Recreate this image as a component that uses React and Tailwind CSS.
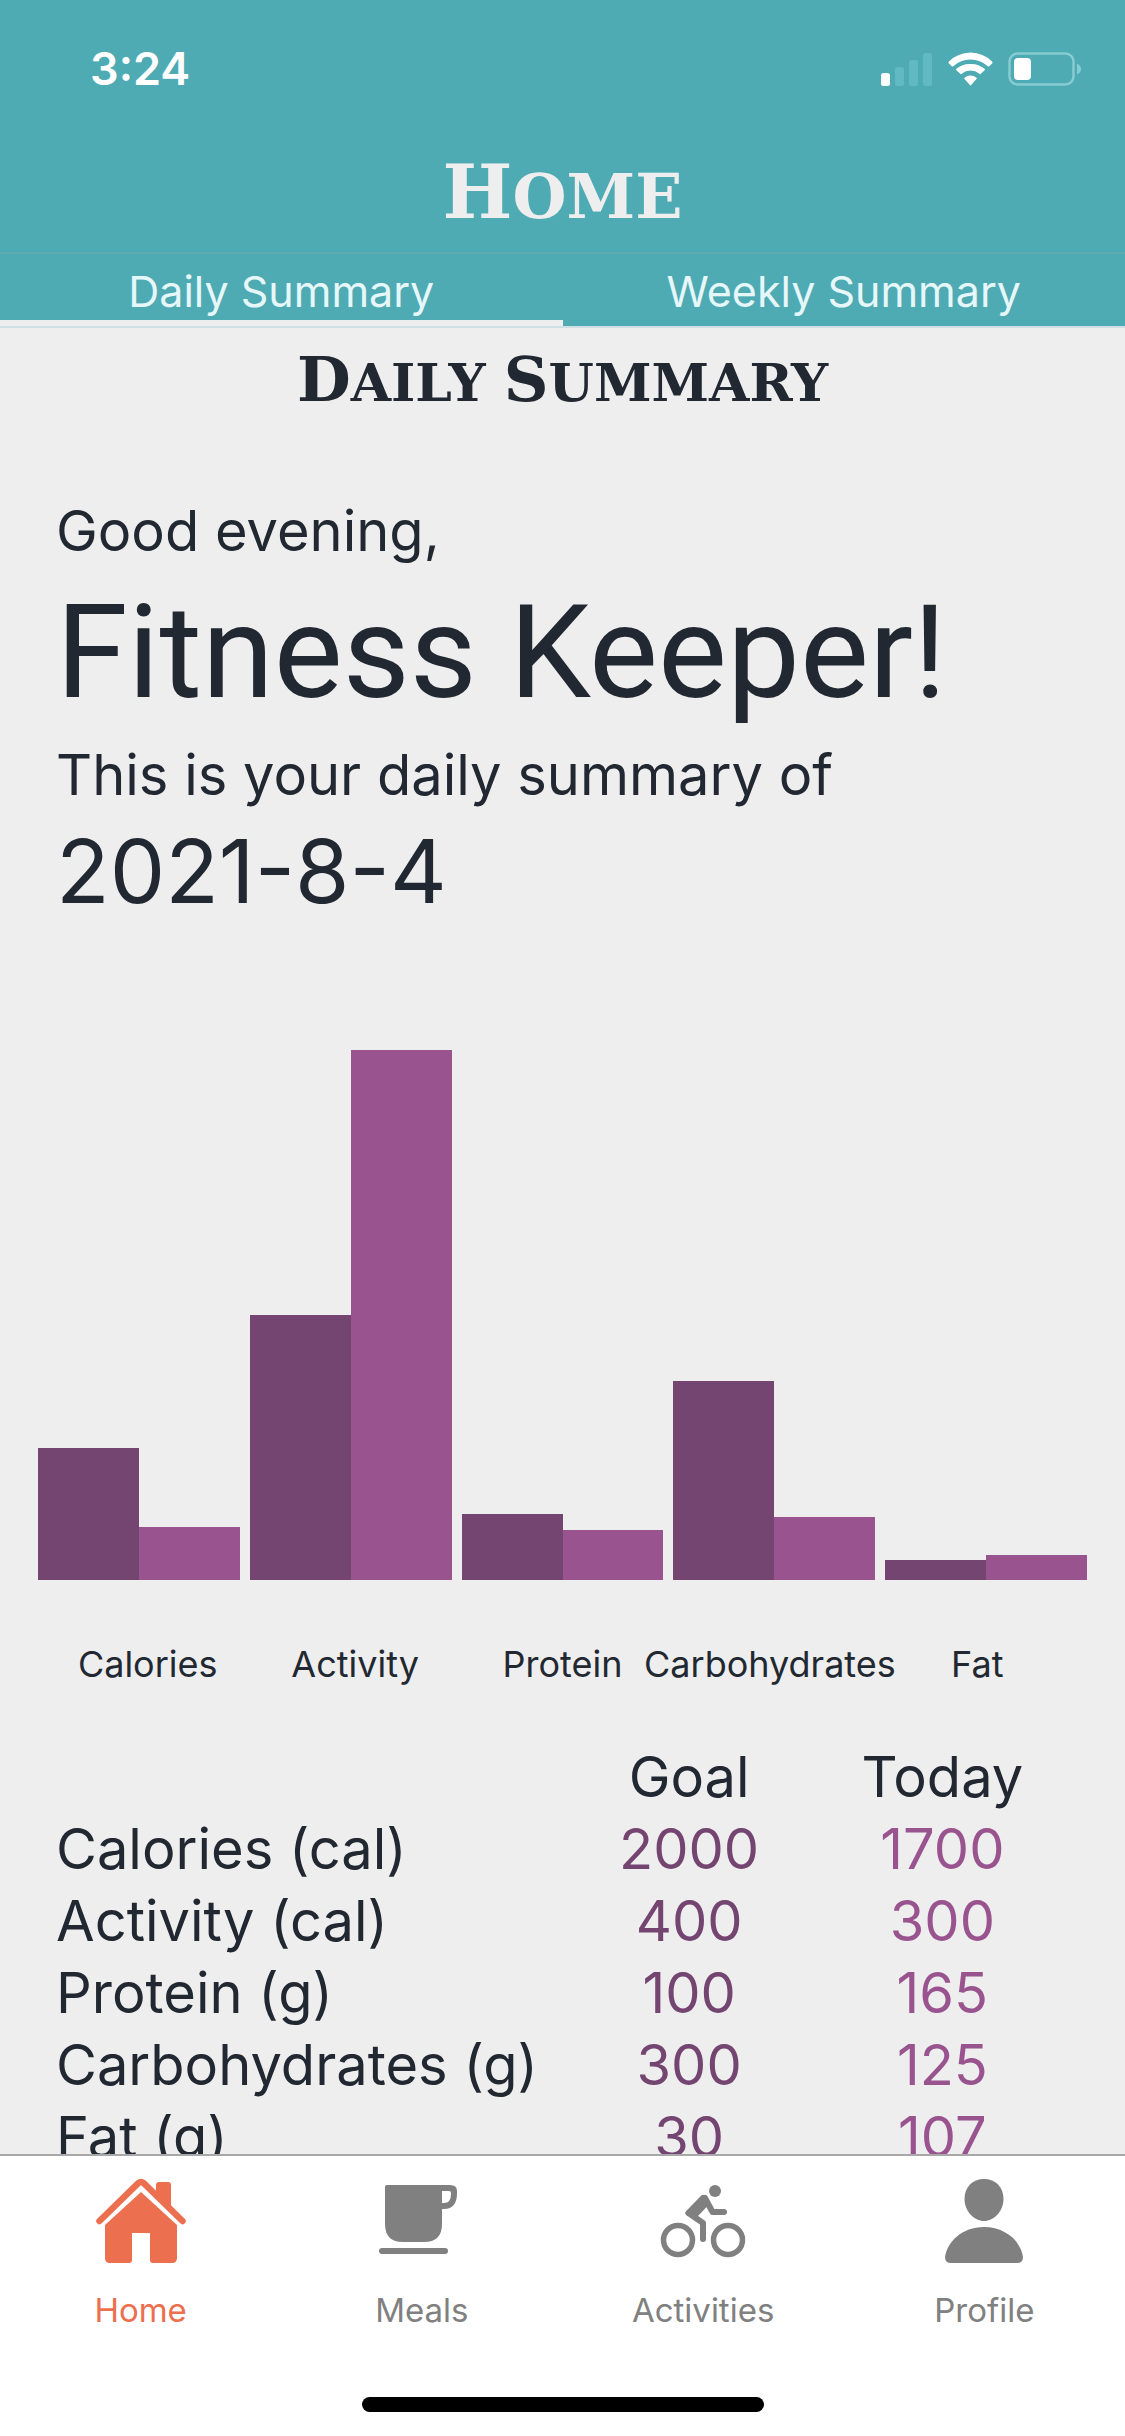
import React from "react";

const metrics = [
  { name: "Calories", unit: "cal", goal: 2000, today: 1700, goalBar: 132, todayBar: 53 },
  { name: "Activity", unit: "cal", goal: 400, today: 300, goalBar: 265, todayBar: 530 },
  { name: "Protein", unit: "g", goal: 100, today: 165, goalBar: 66, todayBar: 50 },
  { name: "Carbohydrates", unit: "g", goal: 300, today: 125, goalBar: 199, todayBar: 63 },
  { name: "Fat", unit: "g", goal: 30, today: 107, goalBar: 20, todayBar: 25 },
];

function StatusIcons() {
  return (
    <div className="flex items-center gap-[15px] text-white">
      <svg width="52" height="36" viewBox="0 0 52 36" aria-label="Signal">
        <rect x="0" y="22" width="9" height="13" rx="2.5" fill="currentColor" />
        <rect x="14" y="16" width="9" height="19" rx="2.5" fill="#61bac3" />
        <rect x="28" y="9" width="9" height="26" rx="2.5" fill="#61bac3" />
        <rect x="42" y="2" width="9" height="33" rx="2.5" fill="#61bac3" />
      </svg>
      <svg width="45" height="36" viewBox="0 0 45 36" aria-label="Wi-Fi" fill="currentColor">
        <path d="M22.500 8.500a26 26 0 0 1 17.300 6.700q.8.700 1.500 0l3-3q.7-.8 0-1.500A31.500 31.500 0 0 0 22.500 1.500 31.500 31.500 0 0 0 .7 10.700q-.7.700 0 1.500l3 3q.7.700 1.500 0A26 26 0 0 1 22.500 8.500Z" />
        <path d="M22.500 19.500a14 14 0 0 1 8.800 3.300q.8.700 1.500 0l3.800-3.500q.7-.8 0-1.600A21 21 0 0 0 22.500 13a21 21 0 0 0-14.100 4.700q-.7.800 0 1.600l3.800 3.500q.7.700 1.500 0A14 14 0 0 1 22.500 19.500Z" />
        <path d="M22.500 24.500a10 10 0 0 0-6 2.200q-.7.700 0 1.400l5.300 6q.7.700 1.400 0l5.300-6q.7-.7 0-1.400a10 10 0 0 0-6-2.200Z" />
      </svg>
      <svg width="73" height="36" viewBox="0 0 73 36" aria-label="Battery">
        <rect x="1.500" y="2.500" width="64" height="31" rx="8" fill="none" stroke="#86ccd2" strokeWidth="2.500" />
        <path d="M69 12.500q4 2 4 5.500t-4 5.500z" fill="#86ccd2" />
        <rect x="6" y="7" width="17" height="22" rx="4" fill="currentColor" />
      </svg>
    </div>
  );
}

function HomeIcon() {
  return (
    <svg width="90" height="90" viewBox="0 0 90 90" fill="currentColor" aria-hidden="true">
      <path d="M60 22V9q0-3 3-3h9q3 0 3 3v28z" />
      <path d="M3.500 45 42.500 7q2.500-2 5 0l39 38" fill="none" stroke="currentColor" strokeWidth="6.500" strokeLinecap="round" />
      <path d="M45 16 81 49v33q0 5-5 5H57q-3 0-3-3V57H36v27q0 3-3 3H14q-5 0-5-5V49z" />
    </svg>
  );
}

function MealsIcon() {
  return (
    <svg width="90" height="90" viewBox="4 0 90 90" fill="currentColor" aria-hidden="true">
      <path fillRule="evenodd" d="M14 9h63q7 0 7 6v2q0 16-13 16h-2v15q0 18-18 18H30q-18 0-18-18V11q0-2 2-2Zm55 6v12h2q7 0 7-9v-1q0-2-2-2z" />
      <rect x="6" y="72" width="69" height="6" rx="3" />
    </svg>
  );
}

function ActivitiesIcon() {
  return (
    <svg width="90" height="90" viewBox="0 0 90 90" fill="none" stroke="currentColor" strokeLinecap="round" strokeLinejoin="round" aria-hidden="true">
      <circle cx="20" cy="64" r="14.500" strokeWidth="5.500" />
      <circle cx="70" cy="64" r="14.500" strokeWidth="5.500" />
      <circle cx="57" cy="15" r="6" fill="currentColor" stroke="none" />
      <path d="M47 22 54.500 36H66" strokeWidth="6" />
      <path d="M45 22 30.500 37 45 47v16" strokeWidth="6" />
      <path d="M45 22 30 37l6.500 3L48 28z" fill="currentColor" strokeWidth="5" />
    </svg>
  );
}

function ProfileIcon() {
  return (
    <svg width="90" height="90" viewBox="0 0 90 90" fill="currentColor" aria-hidden="true">
      <path d="M45 3c11.500 0 19.500 8 19.500 20S55 45 45 45s-19.500-10-19.500-22S33.500 3 45 3Z" />
      <path d="M45 51c22 0 37 15 39 30q0 6-6 6H12q-6 0-6-6c2-15 17-30 39-30Z" />
    </svg>
  );
}

const tabs = [
  { label: "Home", Icon: HomeIcon, active: true },
  { label: "Meals", Icon: MealsIcon },
  { label: "Activities", Icon: ActivitiesIcon },
  { label: "Profile", Icon: ProfileIcon },
];

export default function App() {
  return (
    <div className="flex h-dvh flex-col bg-[#eeeeee] font-['Inter','Noto_Sans',sans-serif] text-[#222831]">
      <header className="bg-[#4eaab3]">
        <div className="flex h-[138px] items-center justify-between pr-11 pl-[90px]">
          <time className="text-[45px] font-semibold text-white">3:24</time>
          <StatusIcons />
        </div>
        <h1 className="flex h-[114px] items-baseline justify-center pt-3 font-['DejaVu_Serif',serif] text-[74px] leading-[84px] font-bold text-[#eeeeee]">
          H<span className="text-[62px] uppercase">ome</span>
        </h1>
        <nav className="flex border-t-2 border-b-2 border-t-[#5fa9b1] border-b-[#cfdfe4]" aria-label="Summary range">
          <button className="h-[72px] flex-1 border-b-[6px] border-[#eeeeee] pt-2 text-[43px] leading-none text-[#e6f7fa]">Daily Summary</button>
          <button className="h-[72px] flex-1 border-b-[6px] border-[#4eaab3] pt-2 text-[43px] leading-none text-[#e6f7fa]">Weekly Summary</button>
        </nav>
      </header>

      <main className="min-h-0 flex-1 overflow-y-auto [scrollbar-width:none]">
        <h2 className="flex items-baseline justify-center whitespace-pre pt-5 font-['DejaVu_Serif',serif] text-[62px] leading-[64px] font-bold">
          D<span className="text-[52px] uppercase">aily </span>S<span className="text-[52px] uppercase">ummary</span>
        </h2>

        <section className="px-14 pt-20">
          <p className="text-[56px] leading-[72px]">Good evening,</p>
          <p className="font-['Roboto','Inter',sans-serif] text-[130px] leading-[172px]">Fitness Keeper!</p>
          <p className="text-[56px] leading-[72px]">This is your daily summary of</p>
          <p className="text-[88px] leading-[120px]">2021-8-4</p>
        </section>

        <section aria-label="Goal and today by category">
          <div className="mt-[119px] flex h-[530px] items-end gap-[10px] px-[38px]">
            {metrics.map((m) => (
              <div key={m.name} className="flex flex-1 items-end">
                <div className="flex-1 bg-[#734570]" style={{ height: m.goalBar }} />
                <div className="flex-1 bg-[#99548f]" style={{ height: m.todayBar }} />
              </div>
            ))}
          </div>
          <div className="mt-[60px] grid grid-cols-5 px-11 text-[36px] leading-[48px]">
            {metrics.map((m) => (
              <div key={m.name} className="flex justify-center whitespace-nowrap">{m.name}</div>
            ))}
          </div>
        </section>

        <section className="mt-[53px] px-14">
          <table className="w-full table-fixed text-[56px] leading-[72px]">
            <thead>
              <tr>
                <td className="w-1/2" />
                <th scope="col" className="w-1/4 font-normal">Goal</th>
                <th scope="col" className="w-1/4 font-normal">Today</th>
              </tr>
            </thead>
            <tbody>
              {metrics.map((m) => (
                <tr key={m.name}>
                  <th scope="row" className="text-left font-normal whitespace-nowrap">{m.name} ({m.unit})</th>
                  <td className="text-center text-[#734570]">{m.goal}</td>
                  <td className="text-center text-[#99548f]">{m.today}</td>
                </tr>
              ))}
            </tbody>
          </table>
        </section>
      </main>

      <footer className="border-t-2 border-[#a8a8a8] bg-white">
        <nav className="flex pt-5" aria-label="Main">
          {tabs.map(({ label, Icon, active }) => (
            <a
              key={label}
              href={"#" + label.toLowerCase()}
              className={"flex flex-1 flex-col items-center gap-4 text-[33px] leading-[56px] " + (active ? "text-[#ec6f50]" : "text-[#808080]")}
            >
              <Icon />
              {label}
            </a>
          ))}
        </nav>
        <div className="mx-auto mt-[59px] mb-6 h-[15px] w-[402px] rounded-full bg-black" />
      </footer>
    </div>
  );
}
